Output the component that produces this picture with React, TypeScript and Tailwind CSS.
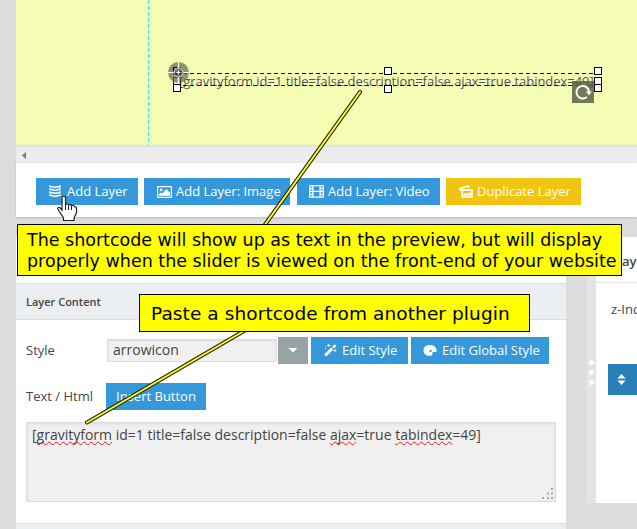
import type { ReactNode } from "react";

const shortcode = "[gravityform id=1 title=false description=false ajax=true tabindex=49]";

function LayersIcon() {
  return (
    <svg width="14" height="13" viewBox="0 0 14 13" className="shrink-0" fill="none" stroke="#fff" strokeWidth="1.5">
      <path d="M1 1c2 .1 3 1.300 6 1.300S11 1.100 13 1M1 4c2 .1 3 1.300 6 1.300S11 4.100 13 4M1 7c2 .1 3 1.300 6 1.300S11 7.100 13 7M1 10c2 .1 3 1.300 6 1.300s4-1.200 6-1.300" />
      <path d="M2.500 1.500v1.500M11.500 1.500v1.500M2.500 7.500V9M11.500 7.500V9" strokeWidth="1" />
    </svg>
  );
}

function ImageIcon() {
  return (
    <svg width="15" height="12" viewBox="0 0 15 12" className="shrink-0" fill="#fff">
      <rect x=".6" y=".6" width="13.800" height="10.800" rx=".6" fill="none" stroke="#fff" strokeWidth="1.200" />
      <circle cx="4.200" cy="3.900" r="1.300" />
      <path d="M2 9.700V8l2-1.600 1.500 1L9.200 3 13 6.800v2.900z" />
    </svg>
  );
}

function FilmIcon() {
  return (
    <svg width="15" height="13" viewBox="0 0 15 13" className="shrink-0" fill="none" stroke="#fff" strokeWidth="1.300">
      <rect x=".7" y=".7" width="13.600" height="11.400" rx=".6" />
      <path d="M3.900 1v11M11.100 1v11M4 6.400h7M.8 3.500h3M.8 6.400h3M.8 9.300h3M11.200 3.500h3M11.200 6.400h3M11.200 9.300h3" />
    </svg>
  );
}

function CopiesIcon() {
  return (
    <svg width="14" height="13" viewBox="0 0 14 13" className="shrink-0" fill="none" stroke="#fff">
      <path d="M2.300 6.200 1 3.600 9.200.9l.9 2" strokeWidth="1.600" />
      <path d="M3.300 12V4.900H13V12z" strokeWidth="1.500" />
      <path d="M3.500 5.200H13" strokeWidth="1.500" />
      <path d="M4 10.500V9.800L6.500 8l2 1L11 7.200l1.500 1.300v2z" fill="#fff" stroke="none" />
    </svg>
  );
}

function WandIcon() {
  return (
    <svg width="13" height="13" viewBox="0 0 13 13" className="shrink-0" fill="none" stroke="#fff">
      <path d="m1.200 11.500 7-7" strokeWidth="3" />
      <path d="m9 3.700 2.500-2.500" strokeWidth="2.500" />
      <path d="M4.500 0v3M3 1.500h3M1 2l1 1M7 1l-.8.8M1 5.300l1.300-.6M11 5v3M9.500 6.500h3" strokeWidth=".8" />
    </svg>
  );
}

function PaletteIcon() {
  return (
    <svg width="14" height="11" viewBox="0 0 14 11" className="shrink-0">
      <path fill="#fff" fillRule="evenodd" d="M6.700 0C2.800 0 .5 2.200.5 5.500S3 10.800 6.800 10.800c2 0 3-.6 2.600-1.700-.5-1.300-.1-2.200 1.500-2.100 1.500.1 2.700-.2 2.700-1.500C13.600 2 10.700 0 6.700 0ZM7.500 5a1.300 1.100 0 1 1 0 2.200A1.300 1.100 0 0 1 7.500 5Z" />
    </svg>
  );
}

function Button({ className, children }: { className: string; children: ReactNode }) {
  return (
    <button className={`flex h-[27px] shrink-0 items-center whitespace-nowrap text-[13px] leading-[27px] text-white ${className}`}>
      {children}
    </button>
  );
}

function Handle({ className }: { className: string }) {
  return <i className={`absolute h-2 w-2 border border-black bg-white ${className}`} />;
}

function Misspelled({ children }: { children: string }) {
  return (
    <span className="underline decoration-[#e02020] decoration-wavy decoration-[1px] underline-offset-[1px] [text-decoration-skip-ink:none]">
      {children}
    </span>
  );
}

function Canvas() {
  return (
    <div className="relative h-[145px] overflow-hidden bg-[#f5fdb4]">
      <svg className="absolute left-[132px] top-0" width="1" height="145">
        <path d="M.5 0v145" stroke="#35f5e5" strokeDasharray="4 2" />
      </svg>
      <div className="absolute left-[163px] top-[72px] whitespace-nowrap text-[13px] leading-[18px] tracking-[-0.030px] text-[#555]">
        {shortcode}
      </div>
      <svg className="absolute left-[160px] top-[72px]" width="424" height="15" fill="none" stroke="#111" strokeDasharray="4 3">
        <path d="M0 1.500h424M0 13.500h424" />
      </svg>
      <div className="absolute left-[556px] top-[81px] flex h-[22px] w-[22px] items-center justify-center bg-[#5d6144]/85">
        <svg width="18" height="18" viewBox="0 0 18 18">
          <path d="M12.800 14A6.300 6.300 0 1 1 15 9" fill="none" stroke="#fff" strokeWidth="2" />
          <path d="M11.800 8.500h6L15 12.300z" fill="#fff" />
        </svg>
      </div>
      <Handle className="left-[157px] top-[67px]" />
      <Handle className="left-[157px] top-[77px]" />
      <Handle className="left-[157px] top-[84px]" />
      <svg className="absolute left-[152px] top-[62px]" width="21" height="21">
        <circle cx="10.500" cy="10.500" r="10.500" fill="#656849" opacity=".7" />
        <path d="M10.500 0v6M0 10.500h6M15 10.500h6M10.500 15v6" stroke="#fff" strokeWidth="1.200" />
        <circle cx="10.500" cy="10.500" r="4.500" fill="#777" stroke="#ccc" />
        <path d="M5.500 9V5.500H9M12.500 9v3H6.500" fill="none" stroke="#111" strokeWidth="1.200" />
        <path d="M8.500 10.500h4M10.500 8.500v4" stroke="#fff" />
      </svg>
      <Handle className="left-[368px] top-[67px]" />
      <Handle className="left-[368px] top-[85px]" />
      <Handle className="left-[578px] top-[67px]" />
      <Handle className="left-[578px] top-[77px]" />
      <Handle className="left-[578px] top-[84px]" />
    </div>
  );
}

function Toolbar() {
  return (
    <div className="flex h-[54px] bg-white pl-5 pt-[15px] shadow-[0_1px_2px_#bbb]">
      <Button className="w-[102px] bg-[#3498db] pl-[12px]">
        <LayersIcon /><span className="ml-[5px]">Add Layer</span>
      </Button>
      <Button className="ml-1.5 w-[146px] bg-[#3498db] pl-[13px]">
        <ImageIcon /><span className="ml-1">Add Layer: Image</span>
      </Button>
      <Button className="ml-[7px] w-[143px] bg-[#3498db] pl-[12px]">
        <FilmIcon /><span className="ml-1">Add Layer: Video</span>
      </Button>
      <Button className="ml-1.5 w-[135px] bg-[#f1c40f] pl-[13px]">
        <CopiesIcon /><span className="ml-1">Duplicate Layer</span>
      </Button>
    </div>
  );
}

function ContentPanel() {
  return (
    <section className="flex w-[550px] shrink-0 flex-col bg-white">
      <div className="h-[46px] shrink-0" />
      <h2 className="flex h-[37px] shrink-0 items-center border-y border-[#dcdfe1] bg-[#ebeff1] pl-[10px] pt-px text-[11px] font-semibold text-[#444]">
        Layer Content
      </h2>
      <div className="mt-[17px] flex h-[27px] items-center pl-[10px]">
        <label className="w-[81px] text-[13px] text-[#444]">Style</label>
        <div className="h-[23px] w-[170px] border border-[#ddd] bg-[#f0f0f0] pl-[5px] text-[14px] leading-[20px] text-[#444] shadow-[inset_0_1px_2px_#ddd]">arrowicon</div>
        <div className="ml-px flex h-[27px] w-[30px] items-center justify-center bg-[#95a5a6]">
          <svg width="10" height="5"><path d="M.5 0h9L5 4.500z" fill="#fff" /></svg>
        </div>
        <Button className="ml-[3px] w-[97px] bg-[#3498db] pl-[13px]">
          <WandIcon /><span className="ml-[5px]">Edit Style</span>
        </Button>
        <Button className="ml-[3px] w-[138px] bg-[#3498db] pl-3">
          <PaletteIcon /><span className="ml-[5px]">Edit Global Style</span>
        </Button>
      </div>
      <div className="mt-[19px] flex h-[27px] items-center pl-[10px]">
        <label className="w-[80px] text-[13px] text-[#444]">Text / Html</label>
        <Button className="w-[100px] justify-center bg-[#3498db]">Insert Button</Button>
      </div>
      <div className="relative ml-[10px] mt-3 h-[80px] w-[530px] shrink-0 border border-[#dcdcdc] bg-[#f0f0f0] pl-[5px] pt-[2px] text-[14px] leading-[19px] text-[#444] shadow-[inset_0_1px_3px_#ddd]">
        <span className="whitespace-nowrap">
          [<Misspelled>gravityform</Misspelled> id=1 title=false description=false <Misspelled>ajax</Misspelled>=true <Misspelled>tabindex</Misspelled>=49]
        </span>
        <svg className="absolute bottom-px right-px" width="12" height="12" fill="#aaa">
          <path d="M9 0h2v2H9zM5 4.500h2v2H5zM9 4.500h2v2H9zM0 9h2v2H0zM5 9h2v2H5zM9 9h2v2H9z" />
        </svg>
      </div>
      <div className="mt-[21px] h-[6px] shrink-0 border-t border-[#dcdfe1] bg-[#ebeff1]" />
    </section>
  );
}

function OrderPanel() {
  return (
    <aside className="ml-5 flex h-[266px] min-w-0 flex-1 overflow-hidden text-[13px] text-[#444]">
      <div className="flex w-[10px] shrink-0 flex-col items-center gap-[5px] bg-[#e4e4e4] pt-[122.500px]">
        <i className="h-[5px] w-[5px] rounded-full bg-white" />
        <i className="h-[5px] w-[5px] rounded-full bg-white" />
        <i className="h-[5px] w-[5px] rounded-full bg-white" />
      </div>
      <div className="flex-1 overflow-hidden bg-white">
        <h2 className="h-[46px] whitespace-nowrap border-b border-[#e5e5e5] pl-[19px] font-semibold leading-[48px]">Layer</h2>
        <div className="h-[81px] whitespace-nowrap pl-[15px] leading-[52px]">z-Index</div>
        <div className="ml-3 flex h-[31px] items-center bg-[#2980b9] pl-[9px]">
          <svg width="9" height="11" fill="#fff"><path d="M4.500 0 8.500 4.500h-8zM.5 6.500h8l-4 4.500z" /></svg>
        </div>
      </div>
    </aside>
  );
}

function Annotations() {
  return (
    <>
      <svg className="absolute left-0 top-0" width="637" height="529" fill="none" strokeLinecap="round">
        <path d="M360 92 264 226M244 331 87 422.500" stroke="#222" strokeWidth="4" />
        <path d="M360 92 264 226M244 331 87 422.500" stroke="#ff0" strokeWidth="2" />
      </svg>
      <div className="absolute left-[17px] top-[224px] h-[52px] w-[605px] whitespace-nowrap border border-black bg-[#ff0] pl-[9px] pt-[5px] font-['DejaVu_Sans',sans-serif] text-[17.500px] leading-[21px] text-black">
        <p className="tracking-[-0.020px]">The shortcode will show up as text in the preview, but will display</p>
        <p>properly when the slider is viewed on the front-end of your website</p>
      </div>
      <div className="absolute left-[139px] top-[294px] h-[38px] w-[391px] whitespace-nowrap border border-black bg-[#ff0] pl-[11px] font-['DejaVu_Sans',sans-serif] text-[18.500px] leading-[38px] tracking-[0.090px] text-black">
        Paste a shortcode from another plugin
      </div>
      <svg className="absolute left-[57px] top-[195px]" width="21" height="27" viewBox="0 0 21 27">
        <path d="M6.500 1.500C8 1 8.500 2 8.500 3v7c.5-1.500 3-1.200 3 .3.700-1.300 3-.8 3 .7.800-1 2.700-.5 3 .8 2-.3 2 1 2 2v4l-2.500 5v2.700H6.500V23L1 14.500c-1-1.500.8-3 2.300-1.500l1.700 2V3c0-.8.600-1.500 1.500-1.500Z" fill="#fff" stroke="#222" strokeWidth="1.200" />
        <path d="M8.500 9v6M11.500 10.500V15M14.500 11v4" stroke="#222" />
      </svg>
    </>
  );
}

export default function App() {
  return (
    <main className="relative h-[529px] w-[637px] overflow-hidden bg-[#dcdcdc] font-['Open_Sans','Noto_Sans',sans-serif]">
      <div className="pl-4">
        <Canvas />
        <div className="flex h-[18px] items-center border-t-2 border-[#e2e0ec] bg-[#ececec] pl-1.5">
          <svg width="4" height="7"><path d="M4 0v7L0 3.500z" fill="#777" /></svg>
        </div>
        <Toolbar />
        <div className="mt-5 flex h-[292px]">
          <ContentPanel />
          <OrderPanel />
        </div>
      </div>
      <Annotations />
    </main>
  );
}
